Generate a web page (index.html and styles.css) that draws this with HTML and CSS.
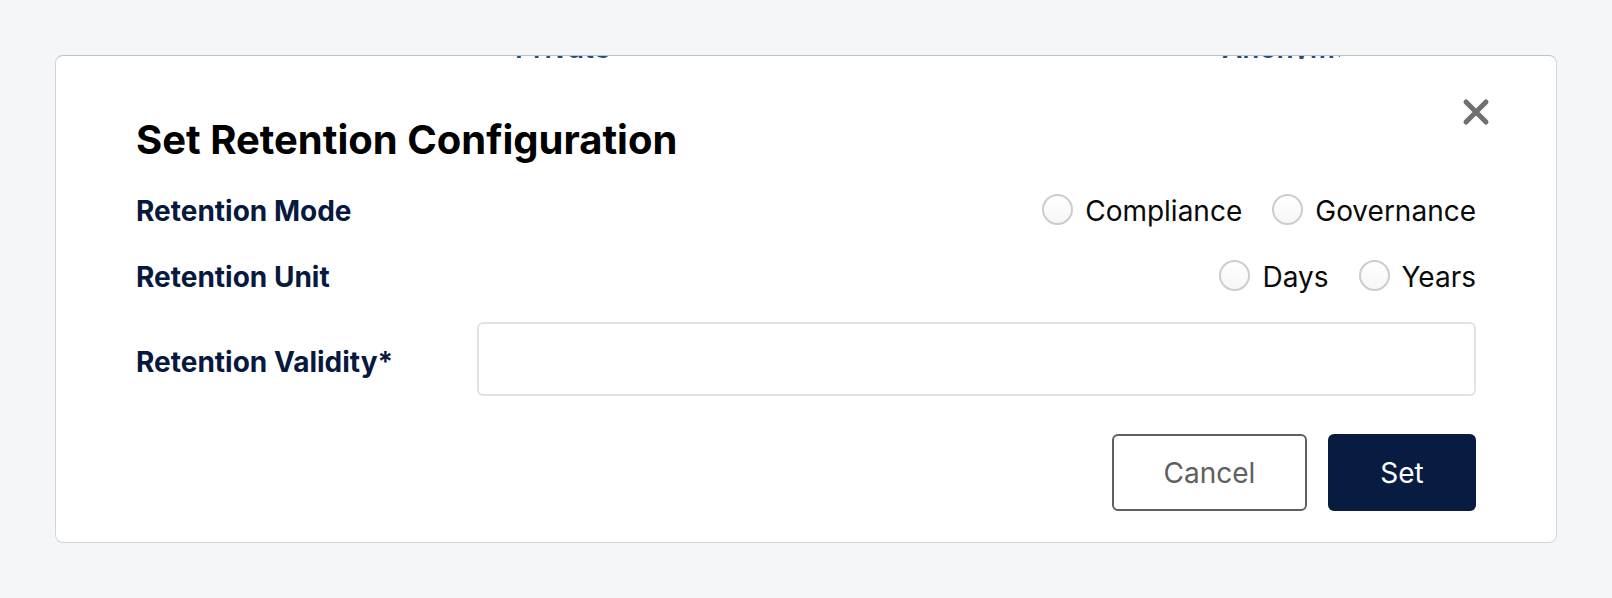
FILE: index.html
```html
<!DOCTYPE html>
<html lang="en">
<head>
<meta charset="utf-8">
<title>Set Retention Configuration</title>
<link rel="stylesheet" href="styles.css">
</head>
<body>
<div class="page">
  <div class="dialog">
    <div class="peek peek-a"><span>Private</span></div>
    <div class="peek peek-b"><span>Anonymous</span></div>
    <button class="close" aria-label="Close">
      <svg width="28" height="28" viewBox="0 0 28 28"><path d="M4 4 L24 24 M24 4 L4 24" stroke="#6f6f6f" stroke-width="5" stroke-linecap="round" fill="none"/></svg>
    </button>
    <h1 class="title">Set Retention Configuration</h1>
    <div class="row row-mode">
      <div class="label">Retention Mode</div>
      <div class="radios">
        <label class="radio"><span class="circle"></span>Compliance</label>
        <label class="radio"><span class="circle"></span>Governance</label>
      </div>
    </div>
    <div class="row row-unit">
      <div class="label">Retention Unit</div>
      <div class="radios">
        <label class="radio"><span class="circle"></span>Days</label>
        <label class="radio"><span class="circle"></span>Years</label>
      </div>
    </div>
    <div class="row row-validity">
      <div class="label label-fixed">Retention Validity*</div>
      <div class="input"></div>
    </div>
    <div class="actions">
      <button class="btn btn-cancel">Cancel</button>
      <button class="btn btn-set">Set</button>
    </div>
  </div>
</div>
</body>
</html>
```

FILE: styles.css
```css
* { box-sizing: border-box; }
html, body {
  margin: 0;
  padding: 0;
  background: #f5f6f8;
  font-family: Inter, "Noto Sans", sans-serif;
}
.page {
  width: 1612px;
  height: 598px;
  padding: 55px;
}
.dialog {
  position: relative;
  height: 488px;
  background: #ffffff;
  border: 1px solid #cfd6de;
  border-top-color: #bcc3cc;
  border-radius: 8px;
  padding: 60px 80px 32px 80px;
  display: flex;
  flex-direction: column;
}
.peek {
  position: absolute;
  top: 0;
  height: 3px;
  overflow: hidden;
  clip-path: inset(0 0 0 0);
  contain: paint;
}
.peek span {
  display: block;
  margin-top: -23px;
  font-size: 28px;
  font-weight: 600;
  line-height: 30px;
  color: #1d4f7c;
  white-space: nowrap;
}
.peek-a { left: 459px; width: 96px; }
.peek-b { left: 1166px; width: 118px; }
.close {
  position: absolute;
  top: 42px;
  right: 66px;
  width: 28px;
  height: 28px;
  padding: 0;
  border: 0;
  background: transparent;
  display: flex;
}
.title {
  margin: 0;
  font-size: 40px;
  line-height: 48px;
  font-weight: 700;
  color: #000000;
}
.row {
  display: flex;
  align-items: center;
  justify-content: space-between;
}
.row-mode { margin-top: 30px; height: 34px; }
.row-unit { margin-top: 32px; height: 34px; }
.row-validity { margin-top: 28px; height: 74px; justify-content: flex-start; }
.label {
  font-size: 28px;
  line-height: 34px;
  font-weight: 700;
  color: #07193e;
}
.label-fixed {
  width: 341px;
  flex: none;
  padding-top: 6px;
}
.radios {
  display: flex;
  align-items: center;
  gap: 30px;
}
.radio {
  display: flex;
  align-items: center;
  gap: 12px;
  font-size: 28px;
  line-height: 34px;
  color: #0a0a0a;
}
.circle {
  width: 31px;
  height: 31px;
  border-radius: 50%;
  border: 2px solid #cdcdcd;
  background: linear-gradient(#ffffff, #f6f6f6);
  margin-top: -4px;
}
.input {
  flex: 1;
  height: 74px;
  border: 2px solid #e3e3e3;
  border-radius: 6px;
  background: #ffffff;
}
.actions {
  margin-top: 38px;
  display: flex;
  justify-content: flex-end;
  gap: 21px;
}
.btn {
  height: 77px;
  border-radius: 6px;
  font-family: Inter, "Noto Sans", sans-serif;
  font-size: 28px;
  padding: 0;
}
.btn-cancel {
  width: 195px;
  background: #ffffff;
  border: 2px solid #5f5f5f;
  color: #606060;
}
.btn-set {
  width: 148px;
  background: #081c42;
  border: 0;
  color: #ffffff;
}
```
